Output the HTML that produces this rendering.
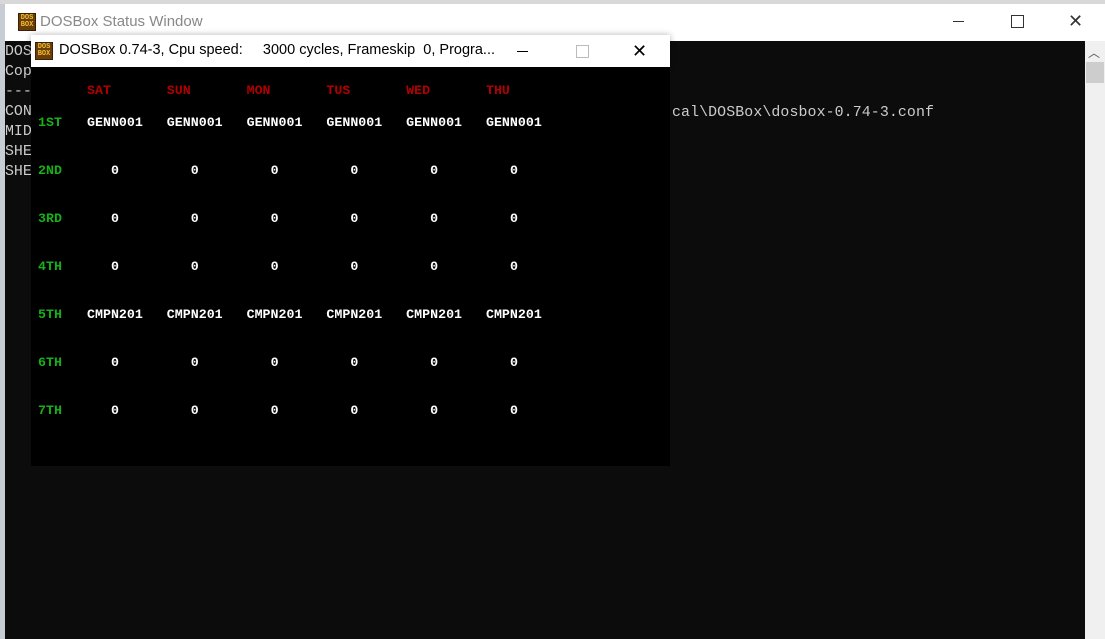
<!DOCTYPE html>
<html><head><style>
body{margin:0;width:1105px;height:639px;overflow:hidden;background:#f0f0f0;position:relative;font-family:"Liberation Sans",sans-serif}
.abs{position:absolute}
.con{font-family:"Liberation Mono",monospace;font-size:14.9px;color:#cccccc;white-space:pre;line-height:20px}
.dos{font-family:"Liberation Mono",monospace;font-size:13.3px;font-weight:bold;white-space:pre}
.icon{width:18px;height:18px;background:#6b3d0a;border:1px solid #3a2005;box-sizing:border-box;font:bold 7px/7px "Liberation Mono",monospace;color:#f0c030;text-align:center;padding-top:1px}
</style></head><body>
<div class="abs" style="left:0;top:0;width:1105px;height:4px;background:#d8d8d8"></div>
<div class="abs" style="left:0;top:4px;width:5px;height:635px;background:#c8ccd4"></div>
<div class="abs" style="left:5px;top:4px;width:1100px;height:37px;background:#fff"></div>
<div class="abs icon" style="left:18px;top:13px">DOS<br>BOX</div>
<div class="abs" style="left:40px;top:13px;font-size:15px;color:#888">DOSBox Status Window</div>
<div class="abs" style="left:953px;top:21px;width:11px;height:1px;background:#333"></div>
<div class="abs" style="left:1011px;top:15px;width:11px;height:11px;border:1px solid #333"></div>
<div class="abs" style="left:1068px;top:14px;font-size:18px;color:#333;line-height:14px">✕</div>
<div class="abs" style="left:5px;top:41px;width:1080px;height:598px;background:#0c0c0c"></div>
<div class="abs" style="left:1085px;top:41px;width:20px;height:598px;background:#f0f0f0"></div>
<div class="abs" style="left:1088px;top:44px;font-size:12px;color:#555">︿</div>
<div class="abs" style="left:1086px;top:62px;width:18px;height:21px;background:#cdcdcd"></div>
<div class="abs con" style="left:5px;top:42px">DOS
Cop
---
CON
MID
SHE
SHE</div>
<div class="abs con" style="left:672px;top:103px;letter-spacing:0.1px">cal\DOSBox\dosbox-0.74-3.conf</div>
<div class="abs" style="left:31px;top:35px;width:639px;height:32px;background:#fff;box-shadow:0 0 6px rgba(0,0,0,.3)"></div>
<div class="abs icon" style="left:35px;top:42px">DOS<br>BOX</div>
<div class="abs" style="left:59px;top:42px;font-size:14.5px;color:#000;white-space:pre">DOSBox 0.74-3, Cpu speed:     3000 cycles, Frameskip  0, Progra...</div>
<div class="abs" style="left:517px;top:51px;width:11px;height:1px;background:#000"></div>
<div class="abs" style="left:576px;top:45px;width:11px;height:11px;border:1px solid #bbb"></div>
<div class="abs" style="left:632px;top:42px;font-size:18px;color:#000;line-height:18px">✕</div>
<div class="abs" style="left:31px;top:67px;width:639px;height:399px;background:#000"></div>
<div class="abs dos" style="left:87px;top:83px;color:#b00000">SAT       SUN       MON       TUS       WED       THU</div>
<div class="abs dos" style="left:38px;top:115px;color:#18b018">1ST</div>
<div class="abs dos" style="left:87px;top:115px;color:#fff">GENN001   GENN001   GENN001   GENN001   GENN001   GENN001</div>
<div class="abs dos" style="left:38px;top:163px;color:#18b018">2ND</div>
<div class="abs dos" style="left:111px;top:163px;color:#fff">0         0         0         0         0         0</div>
<div class="abs dos" style="left:38px;top:211px;color:#18b018">3RD</div>
<div class="abs dos" style="left:111px;top:211px;color:#fff">0         0         0         0         0         0</div>
<div class="abs dos" style="left:38px;top:259px;color:#18b018">4TH</div>
<div class="abs dos" style="left:111px;top:259px;color:#fff">0         0         0         0         0         0</div>
<div class="abs dos" style="left:38px;top:307px;color:#18b018">5TH</div>
<div class="abs dos" style="left:87px;top:307px;color:#fff">CMPN201   CMPN201   CMPN201   CMPN201   CMPN201   CMPN201</div>
<div class="abs dos" style="left:38px;top:355px;color:#18b018">6TH</div>
<div class="abs dos" style="left:111px;top:355px;color:#fff">0         0         0         0         0         0</div>
<div class="abs dos" style="left:38px;top:403px;color:#18b018">7TH</div>
<div class="abs dos" style="left:111px;top:403px;color:#fff">0         0         0         0         0         0</div>
</body></html>
